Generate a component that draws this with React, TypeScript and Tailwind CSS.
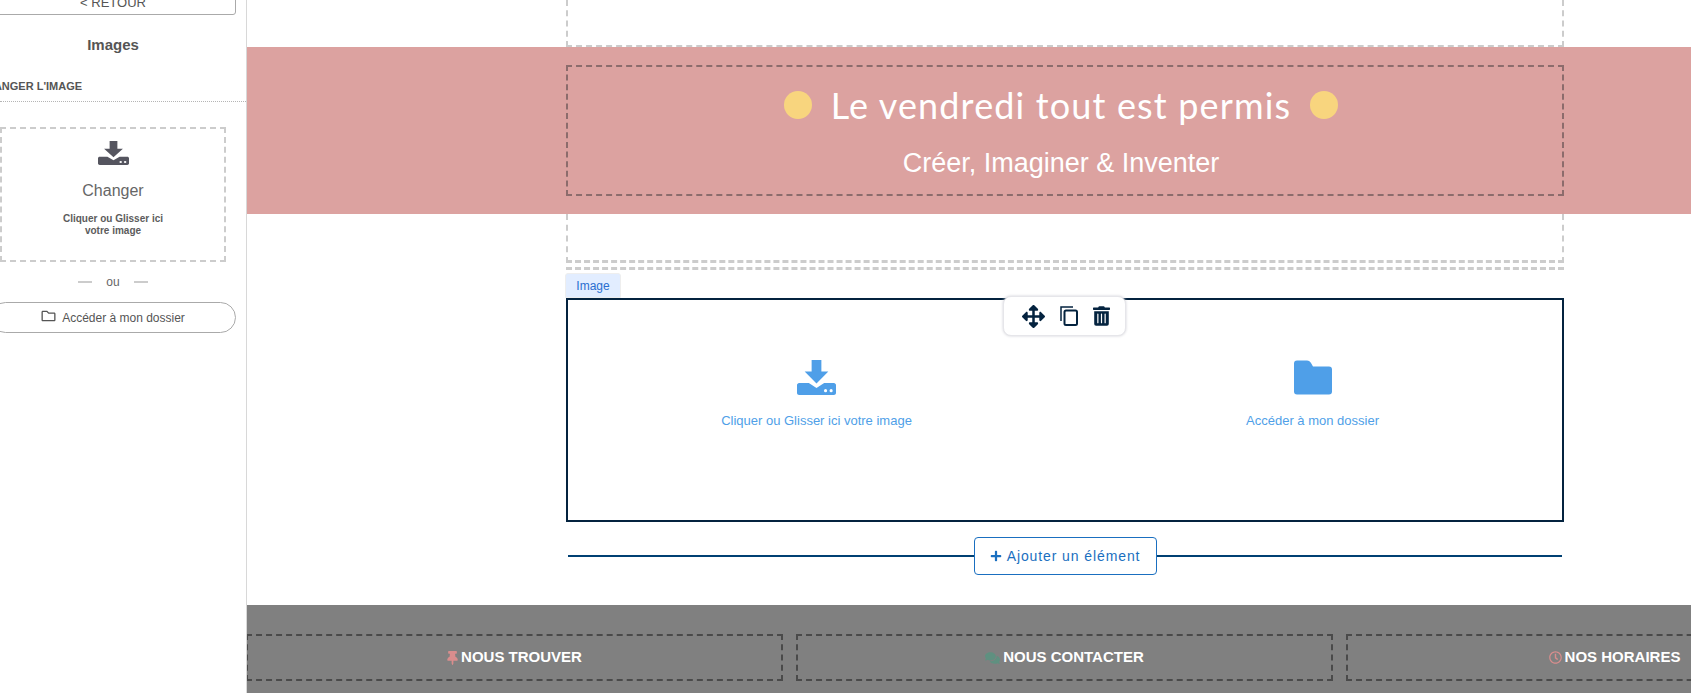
import React from "react";
import { FaRegFolder, FaArrowsAlt, FaTrashAlt, FaPlus, FaThumbtack, FaComments, FaRegClock } from "react-icons/fa";

function DownloadIcon({ className }: { className?: string }) {
  return (
    <svg viewBox="0 0 112 104" preserveAspectRatio="none" className={className} fill="currentColor">
      <path d="M42 0h28v34h20L56 70 22 34h20z" />
      <path d="M6 68h28l22 15 22-15h28c3 0 6 3 6 6v24c0 3-3 6-6 6H6c-3 0-6-3-6-6V74c0-3 3-6 6-6z" />
      <circle cx="82" cy="91" r="4.5" fill="#ffffff" />
      <circle cx="98" cy="91" r="4.5" fill="#ffffff" />
    </svg>
  );
}

function FolderIcon({ className }: { className?: string }) {
  return (
    <svg viewBox="0 0 38 34" className={className} fill="currentColor">
      <path d="M3 0h10c2 0 3 1 4 2.500l2 3.500h16c2 0 3 1 3 3v22c0 2-1 3-3 3H3c-2 0-3-1-3-3V3c0-2 1-3 3-3z" />
    </svg>
  );
}

function CopyIcon({ className }: { className?: string }) {
  return (
    <svg viewBox="0 0 18 20" className={className} fill="none" stroke="currentColor">
      <path d="M1 15V1h12" strokeWidth="1.500" />
      <rect x="4.500" y="4.500" width="12.500" height="14.500" rx="1.500" strokeWidth="2" />
    </svg>
  );
}

function Sidebar() {
  return (
    <aside className="w-[247px] shrink-0 h-full overflow-hidden border-r border-[#d8d8d8] bg-white text-[#555555]">
      <div className="w-[246px] -ml-[10px] flex flex-col items-center">
        <div className="w-full h-[35px] -mt-[20px] border border-[#aaaaaa] rounded-[3px] flex items-center justify-center text-[13px] leading-none pt-[9px]">
          &lt; RETOUR
        </div>
        <div className="mt-[22px] text-[15px] leading-[16px] font-bold">Images</div>
        <div className="mt-[26px] text-[11px] leading-[14px] font-bold self-start -translate-x-[12px] whitespace-nowrap">
          CHANGER L&#39;IMAGE
        </div>
      </div>
      <div className="mt-[8px] border-b border-dotted border-[#b5b5b5]" />
      <div className="w-[226px] mt-[25px] h-[135px] border-2 border-dashed border-[#cccccc] flex flex-col items-center pt-[12px]">
        <DownloadIcon className="w-[31px] h-[24px] text-[#55555f]" />
        <div className="mt-[16px] text-[16px] leading-[20px] text-[#666666]">Changer</div>
        <div className="mt-[12px] text-[10px] leading-[11.5px] font-bold text-center text-[#5c5c5c]">
          Cliquer ou Glisser ici
          <br />
          votre image
        </div>
      </div>
      <div className="w-[226px] mt-[13px] flex items-center justify-center gap-[14px] text-[12px] leading-[14px] text-[#666666]">
        <span className="w-[14px] h-[2px] bg-[#cccccc]" />
        <span>ou</span>
        <span className="w-[14px] h-[2px] bg-[#cccccc]" />
      </div>
      <div className="w-[246px] -ml-[10px] mt-[13px] h-[31px] border border-[#aaaaaa] rounded-full flex items-center justify-center gap-[6px] text-[12px] text-[#555555]">
        <FaRegFolder className="w-[15px] h-[14px] -mt-[3px] text-[#555555]" />
        <span>Accéder à mon dossier</span>
      </div>
    </aside>
  );
}

function Column({ className, children }: { className?: string; children?: React.ReactNode }) {
  return <div className={"w-[998px] ml-[319px] " + (className ?? "")}>{children}</div>;
}

function FooterCell({ icon, label }: { icon: React.ReactNode; label: string }) {
  return (
    <div className="w-[537px] shrink-0 h-[47px] border-2 border-dashed border-[#4a4a4a] flex items-center justify-center gap-[3px] text-[15px] font-bold text-white">
      {icon}
      <span>{label}</span>
    </div>
  );
}

export default function App() {
  return (
    <div className="w-[1691px] h-[693px] flex overflow-hidden bg-white font-['Liberation_Sans',Arial,sans-serif]">
      <Sidebar />
      <main className="flex-1 min-w-0 flex flex-col overflow-hidden">
        <Column className="h-[47px] shrink-0 border-x-2 border-b-2 border-dashed border-[#cccccc]" />
        <section className="h-[167px] shrink-0 bg-[#dca2a0] pt-[18px]">
          <Column className="h-[131px] border-2 border-dashed border-[#8c6c6c] flex flex-col items-center text-white pr-[8px]">
            <div className="mt-[14px] flex items-center gap-[19px] h-[48px]">
              <span className="w-[28px] h-[28px] rounded-full bg-[#f8d57e]" />
              <span className="font-['Lato',sans-serif] text-[36px] leading-[48px] tracking-[1.15px]">Le vendredi tout est permis</span>
              <span className="w-[28px] h-[28px] rounded-full bg-[#f8d57e]" />
            </div>
            <div className="mt-[18px] text-[27px] leading-[32px]">Créer, Imaginer &amp; Inventer</div>
          </Column>
        </section>
        <Column className="h-[49px] shrink-0 border-x-2 border-b-[3px] border-dashed border-[#cccccc]" />
        <Column className="h-[3px] shrink-0 mt-[4px] border-t-[3px] border-dashed border-[#cccccc]" />
        <Column className="relative mt-[28px] h-[224px] shrink-0 border-2 border-[#04233f] grid grid-cols-2 pt-[60px]">
          <span className="absolute left-[-3px] top-[-27px] w-[56px] h-[25px] bg-[#e2edff] rounded-t-[3px] border border-[#eeeeee] text-[12px] text-[#2a6fd0] flex items-center justify-center">
            Image
          </span>
          <div className="absolute left-[435px] top-[-4px] w-[123px] h-[40px] pl-[3px] bg-white rounded-[8px] border border-[#e6e6ea] shadow-[0_0_3px_#cfcfd6] flex items-center justify-center gap-[15px] text-[#04233f]">
            <FaArrowsAlt className="w-[23px] h-[23px]" />
            <CopyIcon className="w-[18px] h-[20px]" />
            <FaTrashAlt className="w-[17px] h-[20px]" />
          </div>
          <div className="flex flex-col items-center text-[#4f9fe8]">
            <DownloadIcon className="w-[39px] h-[35px]" />
            <div className="mt-[18px] text-[13px] leading-[16px]">Cliquer ou Glisser ici votre image</div>
          </div>
          <div className="flex flex-col items-center text-[#4f9fe8] pr-[2px]">
            <FolderIcon className="w-[38px] h-[35px]" />
            <div className="mt-[18px] text-[13px] leading-[16px]">Accéder à mon dossier</div>
          </div>
        </Column>
        <div className="w-[994px] ml-[321px] mt-[15px] h-[38px] shrink-0 flex items-center">
          <span className="flex-1 h-[2px] bg-[#004073]" />
          <div className="w-[183px] h-[38px] border border-[#1a6fc0] rounded-[4px] flex items-center justify-center gap-[5px] text-[14px] tracking-[0.9px] text-[#1a6fc0] bg-white">
            <FaPlus className="w-[12px] h-[12px]" />
            <span>Ajouter un élément</span>
          </div>
          <span className="flex-1 h-[2px] bg-[#004073]" />
        </div>
        <footer className="mt-[30px] flex-1 bg-[#808080] pt-[29px] overflow-hidden">
          <div className="flex gap-[13px] -ml-[1px]">
            <FooterCell icon={<FaThumbtack className="w-[11px] h-[14px] text-[#d98d8d]" />} label="NOUS TROUVER" />
            <FooterCell icon={<FaComments className="w-[15px] h-[14px] text-[#5f9080]" />} label="NOUS CONTACTER" />
            <FooterCell icon={<FaRegClock className="w-[13px] h-[13px] text-[#d98d8d]" />} label="NOS HORAIRES" />
          </div>
        </footer>
      </main>
    </div>
  );
}
